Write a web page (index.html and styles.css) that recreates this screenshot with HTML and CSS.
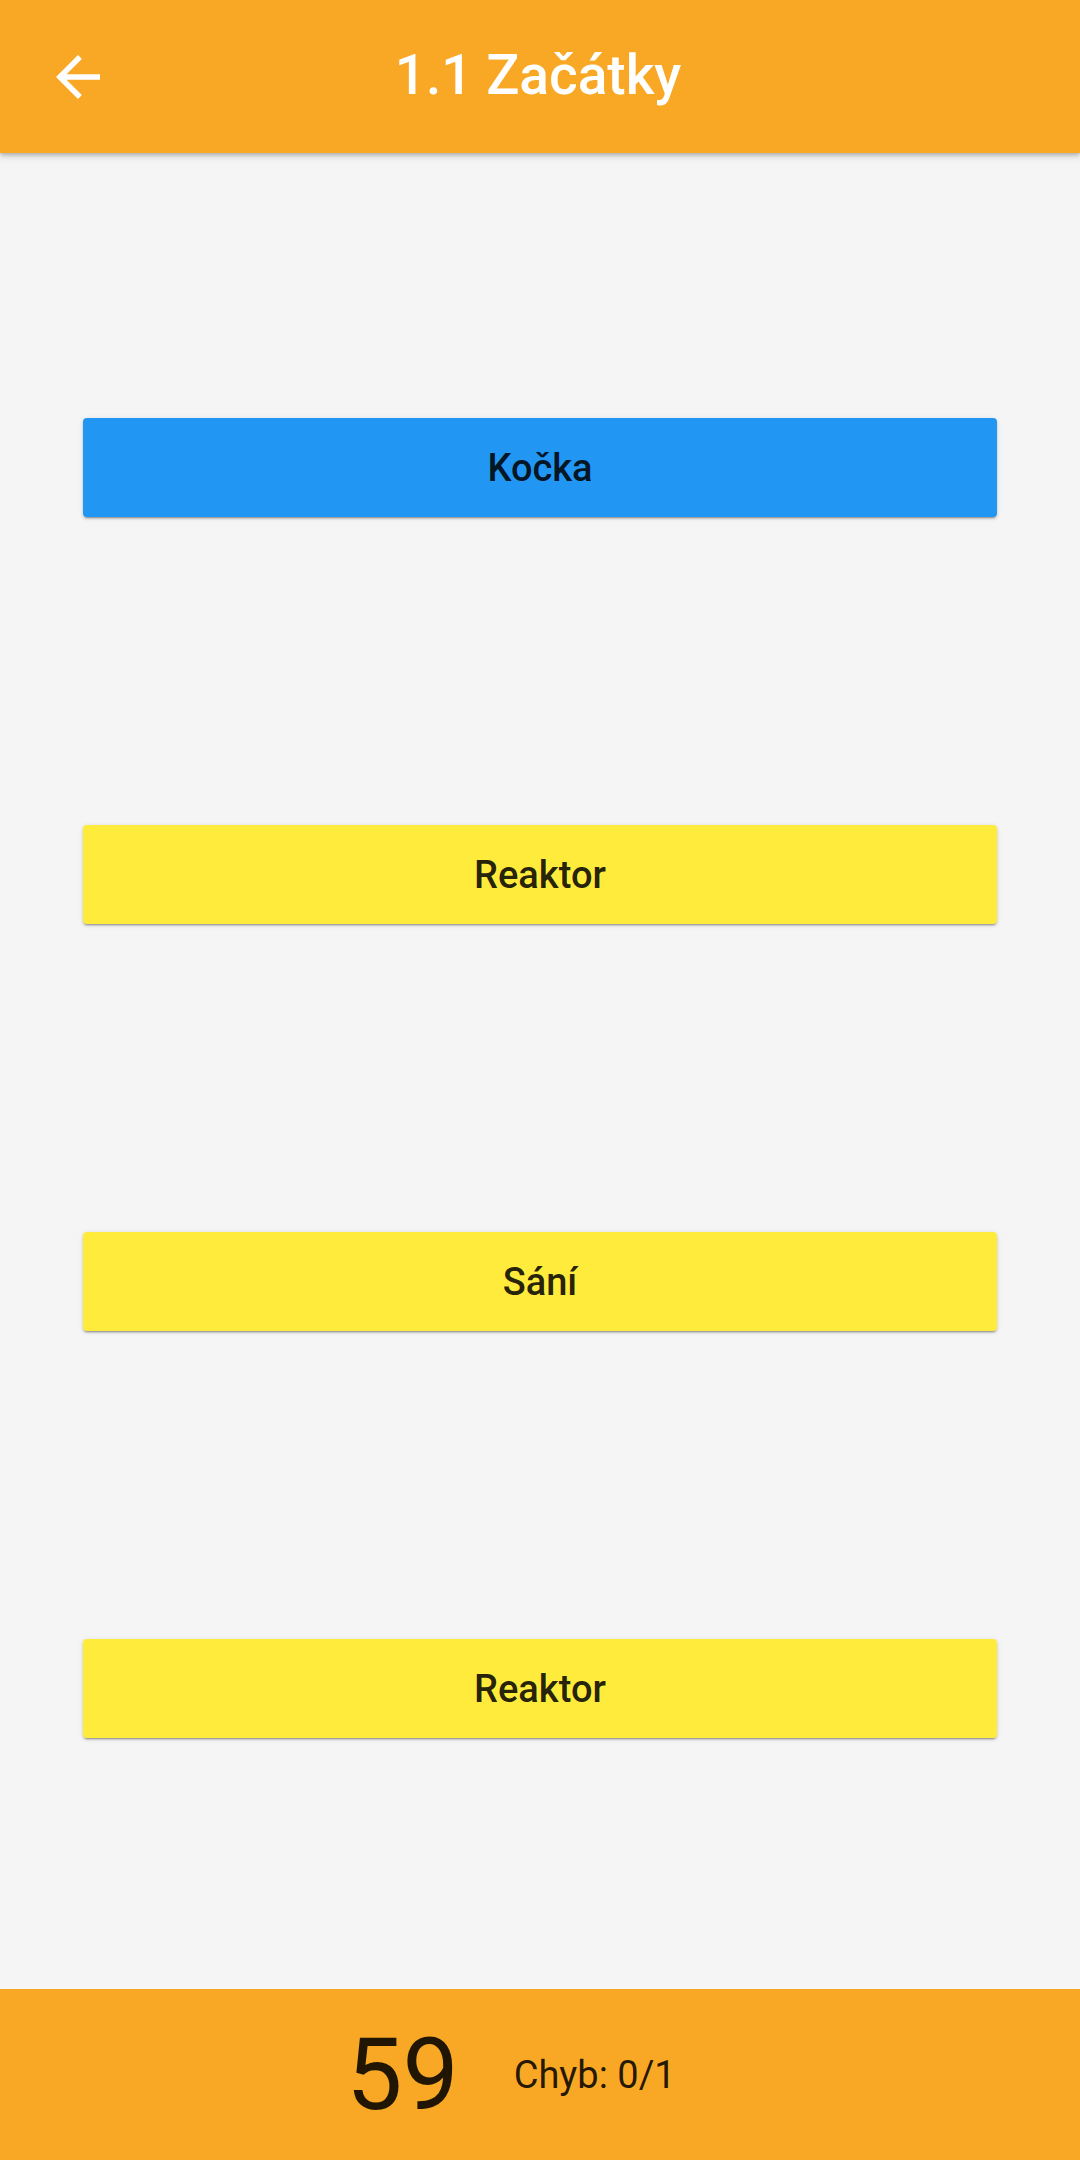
FILE: index.html
```html
<!DOCTYPE html>
<html lang="cs">
<head>
<meta charset="utf-8">
<title>1.1 Začátky</title>
<link rel="stylesheet" href="styles.css">
</head>
<body>
<div class="app">
  <header class="appbar">
    <button class="back" aria-label="Zpět">
      <svg viewBox="0 0 24 24" width="66" height="66"><path fill="#fff" d="M20 11H7.83l5.59-5.59L12 4l-8 8 8 8 1.41-1.41L7.83 13H20v-2z"/></svg>
    </button>
    <h1 class="title">1.1 Začátky</h1>
  </header>
  <main class="content">
    <button class="choice blue">Kočka</button>
    <button class="choice yellow">Reaktor</button>
    <button class="choice yellow">Sání</button>
    <button class="choice yellow">Reaktor</button>
  </main>
  <footer class="bottombar">
    <span class="timer">59</span>
    <span class="errors">Chyb: 0/1</span>
  </footer>
</div>
</body>
</html>
```
FILE: styles.css
```css
* { box-sizing: border-box; }
html, body {
  margin: 0;
  padding: 0;
  width: 1080px;
  height: 2160px;
  background: #f5f5f5;
  font-family: Roboto, "Noto Sans", sans-serif;
}
.app {
  display: flex;
  flex-direction: column;
  height: 2160px;
}
.appbar {
  position: relative;
  z-index: 2;
  height: 153px;
  flex: 0 0 153px;
  background: #f9a825;
  display: flex;
  align-items: center;
  box-shadow: 0 2px 4px rgba(0,0,0,0.22), 0 4px 8px rgba(0,0,0,0.10);
}
.back {
  position: absolute;
  left: 45px;
  top: 44px;
  width: 66px;
  height: 66px;
  padding: 0;
  border: 0;
  background: none;
  display: flex;
}
.title {
  margin: 0;
  width: 100%;
  text-align: center;
  color: #fff;
  font-weight: 500;
  font-size: 55px;
  line-height: 1;
  padding-bottom: 2px;
  padding-right: 4px;
}
.content {
  flex: 1;
  display: flex;
  flex-direction: column;
  padding: 265px 83px 0;
  gap: 308px;
}
.choice {
  height: 99px;
  width: 914px;
  border: 0;
  border-radius: 4px;
  font-family: Roboto, "Noto Sans", sans-serif;
  font-weight: 500;
  font-size: 38px;
  color: rgba(0,0,0,0.87);
  box-shadow: 0 3px 1px -2px rgba(0,0,0,0.2), 0 2px 2px 0 rgba(0,0,0,0.14), 0 1px 5px 0 rgba(0,0,0,0.12);
  padding: 0;
}
.blue { background: #2196f3; }
.yellow { background: #ffeb3b; }
.bottombar {
  flex: 0 0 171px;
  height: 171px;
  background: #f9a825;
  display: flex;
  align-items: center;
  justify-content: center;
  gap: 55px;
  padding-right: 58px;
  color: rgba(0,0,0,0.87);
}
.timer {
  font-size: 100px;
  line-height: 1;
}
.errors {
  font-size: 38px;
  line-height: 1;
}
```
